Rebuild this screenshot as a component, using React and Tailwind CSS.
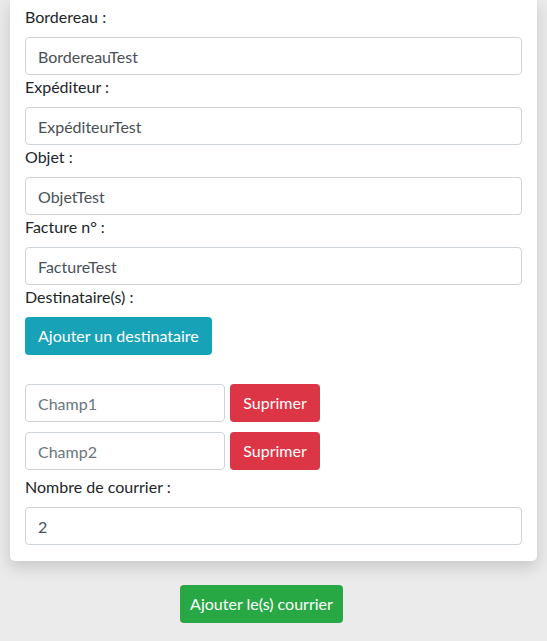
import React from 'react';

const fields = [
  { label: 'Bordereau :', value: 'BordereauTest' },
  { label: 'Expéditeur :', value: 'ExpéditeurTest' },
  { label: 'Objet :', value: 'ObjetTest' },
  { label: 'Facture n° :', value: 'FactureTest' },
];

const inputCls =
  'block h-[38px] rounded-[4px] border border-[#ced4da] bg-white px-3 text-[16px] text-[#495057] placeholder:text-[#6c757d] outline-none';

export default function App() {
  return (
    <div className="min-h-[641px] bg-[#ebebeb] px-[10px] font-['Lato',sans-serif] text-[16px] leading-6 text-[#212529]">
      {/* Form card */}
      <div className="rounded-b-[5px] bg-white px-[15px] pt-[5px] pb-4 shadow-[0_6px_16px_rgba(0,0,0,0.16)]">
        {fields.map((f) => (
          <div key={f.label}>
            <label className="mb-2 block">{f.label}</label>
            <input className={`${inputCls} w-full`} defaultValue={f.value} />
          </div>
        ))}

        <label className="mb-2 block">Destinataire(s) :</label>
        <button className="h-[38px] rounded-[4px] bg-[#17a2b8] px-[13px] text-white">Ajouter un destinataire</button>

        <div className="mt-[29px] flex flex-col gap-[10px]">
          {['Champ1', 'Champ2'].map((c) => (
            <div key={c} className="flex gap-[5px]">
              <input className={`${inputCls} w-[200px]`} placeholder={c} />
              <button className="h-[38px] w-[90px] rounded-[4px] bg-[#dc3545] text-white">Suprimer</button>
            </div>
          ))}
        </div>

        <label className="mt-[5px] mb-2 block">Nombre de courrier :</label>
        <input className={`${inputCls} w-full`} defaultValue="2" />
      </div>

      <div className="pt-[24px] pl-[170px]">
        <button className="h-[38px] w-[163px] rounded-[4px] bg-[#28a745] text-white">Ajouter le(s) courrier</button>
      </div>
    </div>
  );
}
